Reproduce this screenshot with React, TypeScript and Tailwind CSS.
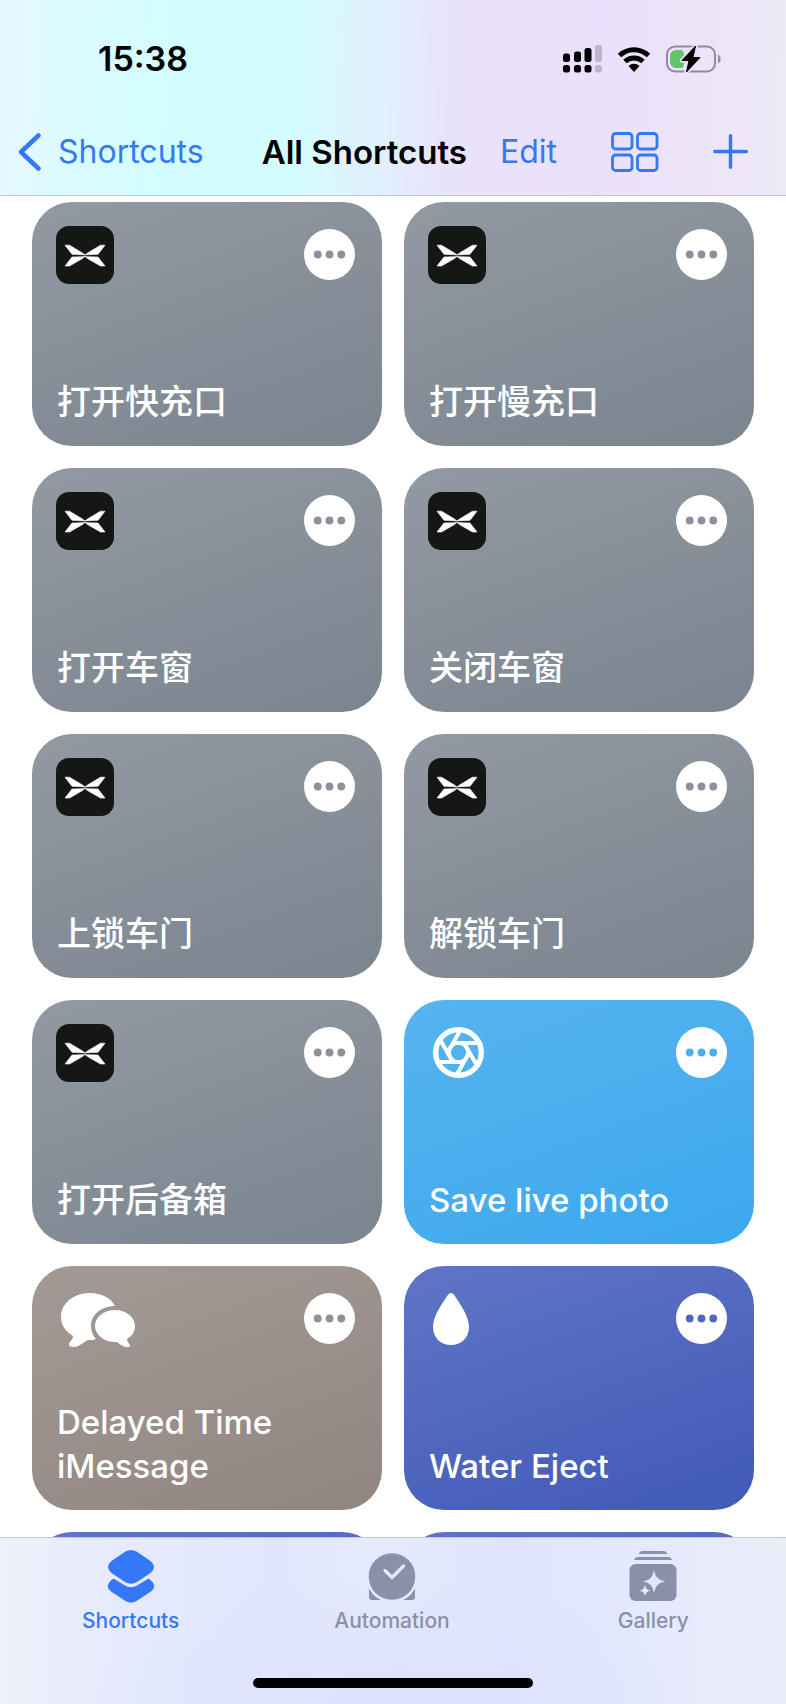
import React from 'react';

type Glyph = 'app' | 'aperture' | 'bubbles' | 'drop';
type Tone = 'gray' | 'sky' | 'taupe' | 'indigo';

interface Shortcut {
    title: string;
    glyph: Glyph;
    tone: Tone;
}

const shortcuts: Shortcut[] = [
    { title: '打开快充口', glyph: 'app', tone: 'gray' },
    { title: '打开慢充口', glyph: 'app', tone: 'gray' },
    { title: '打开车窗', glyph: 'app', tone: 'gray' },
    { title: '关闭车窗', glyph: 'app', tone: 'gray' },
    { title: '上锁车门', glyph: 'app', tone: 'gray' },
    { title: '解锁车门', glyph: 'app', tone: 'gray' },
    { title: '打开后备箱', glyph: 'app', tone: 'gray' },
    { title: 'Save live photo', glyph: 'aperture', tone: 'sky' },
    { title: 'Delayed Time iMessage', glyph: 'bubbles', tone: 'taupe' },
    { title: 'Water Eject', glyph: 'drop', tone: 'indigo' },
];

const toneStyles: Record<Tone, { card: string; dots: string }> = {
    gray: { card: 'from-[#9299a2] to-[#7b858f]', dots: 'text-[#8a919b]' },
    sky: { card: 'from-[#56b4ef] to-[#3ca8ee]', dots: 'text-[#4aafef]' },
    taupe: { card: 'from-[#a39a96] to-[#918581]', dots: 'text-[#9a8f8b]' },
    indigo: { card: 'from-[#6075c6] to-[#4159b8]', dots: 'text-[#5067c0]' },
};

const AppGlyph = () => (
    <svg viewBox="0 0 58 58" className="w-[58px] h-[58px]">
        <rect width="58" height="58" rx="13" fill="#141713" />
        <g fill="#fff" stroke="#fff" strokeWidth="0.6" strokeLinejoin="round">
            <path d="M9 19.200 H13.500 L26.500 27 L29 29 L26 28.700 L16 28.300 Z" />
            <path d="M9 40 H13.500 L26.500 32.600 L29 30.400 L26 30.700 L16 31 Z" />
            <path d="M49 19.200 H44.500 L31.500 27 L29 29 L32 28.700 L42 28.300 Z" />
            <path d="M49 40 H44.500 L31.500 32.600 L29 30.400 L32 30.700 L42 31 Z" />
        </g>
    </svg>
);

const ApertureGlyph = () => (
    <svg viewBox="0 0 51 51" className="w-[51px] h-[51px]" fill="none" stroke="#fff">
        <circle cx="25.500" cy="25.500" r="22.800" strokeWidth="5.400" />
        <circle cx="25.500" cy="25.500" r="9.500" strokeWidth="3.600" />
        {[0, 60, 120, 180, 240, 300].map((angle) => (
            <path key={angle} d="M19 16 H44" strokeWidth="4" transform={`rotate(${angle} 25.5 25.5)`} />
        ))}
    </svg>
);

const BubblesGlyph = () => (
    <svg viewBox="0 0 75 55" className="w-[75px] h-[55px]" fill="#fff">
        <path d="M54 13 C50 5 40 0 29 0 C13 0 0 10 0 24 C0 32 4 38 12 43 C12 47 8 49 8 51 C8 54 11 54 14 54 C19 53 23 49 27 47 C30 47 33 47 35 46 C32 43 30 38 30 33 C30 22 40 13 54 13 Z" />
        <path d="M54 17 C65 17 74 24 74 33 C74 39 71 43 66 46 C66 49 69 51 69 53 C68 55 64 54 62 53 C59 52 58 50 56 49 C44 50 34 42 34 33 C34 24 43 17 54 17 Z" />
    </svg>
);

const DropGlyph = () => (
    <svg viewBox="0 0 36 52" className="w-9 h-[52px]" fill="#fff">
        <path d="M18 0 C19.500 0 20.500 1 21.500 2.500 C27 11 36 23 36 34 C36 45 28 52 18 52 C8 52 0 45 0 34 C0 23 9 11 14.500 2.500 C15.500 1 16.500 0 18 0 Z" />
    </svg>
);

const glyphs: Record<Glyph, React.ReactNode> = {
    app: <AppGlyph />,
    aperture: <div className="pt-[3px] pl-[5px]"><ApertureGlyph /></div>,
    bubbles: <div className="pt-[3px] pl-[5px]"><BubblesGlyph /></div>,
    drop: <div className="pt-[3px] pl-[5px]"><DropGlyph /></div>,
};

const ShortcutCard: React.FC<Shortcut> = ({ title, glyph, tone }) => (
    <li className={`flex flex-col justify-between h-[244px] px-6 pt-6 pb-[22px] rounded-[40px] bg-linear-160 ${toneStyles[tone].card}`}>
        <div className="flex items-start justify-between">
            {glyphs[glyph]}
            <button type="button" aria-label={`Edit ${title}`} className={`mt-[3px] mr-[3px] ${toneStyles[tone].dots}`}>
                <svg viewBox="0 0 52 52" className="block w-[51px] h-[51px]">
                    <circle cx="26" cy="26" r="26" fill="#fff" />
                    <g fill="currentColor">
                        <circle cx="14" cy="26" r="4" />
                        <circle cx="26" cy="26" r="4" />
                        <circle cx="38" cy="26" r="4" />
                    </g>
                </svg>
            </button>
        </div>
        <h2 className={`pl-px leading-[44px] font-medium text-white ${glyph === 'app' ? 'text-[34px]' : 'text-[33px]'}`}>{title}</h2>
    </li>
);

const StatusBar = () => (
    <div className="flex items-center justify-between h-[118px] pl-[98px] pr-[65px]">
        <span className="text-[34px] leading-10 font-semibold text-black">15:38</span>
        <div className="flex items-center gap-[15px]">
            <svg viewBox="0 0 39 28" className="w-[39px] h-7">
                <rect x="0" y="8.500" width="7" height="8.500" rx="2.500" />
                <rect x="11" y="6.500" width="7" height="10.500" rx="2.500" />
                <rect x="21.500" y="3" width="7" height="14" rx="2.500" />
                <rect x="0" y="20" width="7" height="7.500" rx="2.500" />
                <rect x="11" y="20" width="7" height="7.500" rx="2.500" />
                <rect x="21.500" y="20" width="7" height="7.500" rx="2.500" />
                <g fill="#c0b4cd">
                    <rect x="32" y="0" width="7" height="17" rx="2.500" />
                    <rect x="32" y="20" width="7" height="7.500" rx="2.500" />
                </g>
            </svg>
            <svg viewBox="0 0 34 26" className="w-[34px] h-[26px]" fill="none" stroke="#000" strokeWidth="5">
                <path d="M2.500 9.500 A21 21 0 0 1 31.500 9.500" />
                <path d="M8 15.500 A13 13 0 0 1 26 15.500" />
                <path d="M17 26 L11.500 20 A8 8 0 0 1 22.500 20 Z" fill="#000" stroke="none" />
            </svg>
            <svg viewBox="0 0 55 28" className="w-[55px] h-7">
                <rect x="1" y="1.500" width="48" height="25" rx="8" fill="none" stroke="#93899c" strokeWidth="2" />
                <path d="M52 9.500 C55.500 11 55.500 17 52 18.500 Z" fill="#93899c" />
                <path d="M10 5 H16 Q18.500 6.500 18.500 14 Q18.500 21.500 16 23 H10 A6 6 0 0 1 4 17 V11 A6 6 0 0 1 10 5 Z" fill="#62c466" />
                <path d="M29.500 1 L16 15.500 H23 L20.500 27 L34 12.500 H27 Z" stroke="#ebe0fa" strokeWidth="4.500" strokeLinejoin="round" />
                <path d="M29.500 1 L16 15.500 H23 L20.500 27 L34 12.500 H27 Z" stroke="#000" strokeWidth="1" strokeLinejoin="round" />
            </svg>
        </div>
    </div>
);

const NavBar = () => (
    <nav className="flex items-center flex-1 pl-[18px] pr-[38px] pb-[10px] text-[32px] leading-10 text-[#3478f6]">
        <a href="#back" className="flex items-center gap-[17px]">
            <svg viewBox="0 0 23 38" className="w-[23px] h-[38px]" fill="none" stroke="currentColor" strokeWidth="4.500" strokeLinecap="round" strokeLinejoin="round">
                <path d="M20.500 2.500 L3 19 L20.500 35.500" />
            </svg>
            Shortcuts
        </a>
        <h1 className="ml-auto mr-[33px] text-[33px] font-semibold text-black">All Shortcuts</h1>
        <button type="button">Edit</button>
        <button type="button" aria-label="Grid view" className="ml-[54px]">
            <svg viewBox="0 0 48 40" className="block w-12 h-10" fill="none" stroke="currentColor" strokeWidth="2.800">
                <rect x="1.500" y="1.500" width="19.500" height="15.500" rx="3" />
                <rect x="26.500" y="1.500" width="19.500" height="15.500" rx="3" />
                <rect x="1.500" y="23" width="19.500" height="15.500" rx="3" />
                <rect x="26.500" y="23" width="19.500" height="15.500" rx="3" />
            </svg>
        </button>
        <button type="button" aria-label="Add shortcut" className="ml-[54px]">
            <svg viewBox="0 0 35 35" className="block w-[35px] h-[35px]" fill="none" stroke="currentColor" strokeWidth="3.400" strokeLinecap="round">
                <path d="M17.500 1.700 V33.300 M1.700 17.500 H33.300" />
            </svg>
        </button>
    </nav>
);

const ShortcutsTabIcon = () => (
    <svg viewBox="0 0 48 54" className="w-12 h-[54px]" fill="currentColor">
        <path d="M18.500 2.500 Q24 -0.500 29.500 2.500 L43.500 12 Q50.500 18 43.500 24 L30 33 Q24 36.500 18 33 L4.500 24 Q-2.500 18 4.500 12 Z" />
        <path d="M6.500 29.500 L18 36.500 Q24 40 30 36.500 L41.500 29.500 L44 31.500 Q50.500 37 44 42.500 L29.500 52 Q24 55 18.500 52 L4 42.500 Q-2.500 37 4 31.500 Z" />
    </svg>
);

const AutomationTabIcon = () => (
    <svg viewBox="0 0 48 54" className="w-12 h-[54px]" fill="currentColor">
        <path d="M1 36 H47 V48 Q47 51 44 51 H4 Q1 51 1 48 Z" />
        <circle cx="24" cy="27.500" r="26" fill="#e3e8fd" />
        <circle cx="24" cy="27.500" r="23.300" />
        <path d="M17 21.500 L24 28.500 L35.500 17" fill="none" stroke="#e5eafc" strokeWidth="3.200" strokeLinecap="round" strokeLinejoin="round" />
    </svg>
);

const GalleryTabIcon = () => (
    <svg viewBox="0 0 48 54" className="w-12 h-[54px]" fill="currentColor">
        <path d="M13 2 H35 Q37 2 38.500 5 H9.500 Q11 2 13 2 Z" />
        <path d="M9 8 H39 Q42 8 43 11 H5 Q6 8 9 8 Z" />
        <rect x="0.500" y="15" width="47" height="37" rx="6" />
        <g fill="#e3e7fc">
            <path d="M25 21 Q26.500 31.500 36.500 32.500 Q26.500 33.500 25 44 Q23.500 33.500 14 32.500 Q23.500 31.500 25 21 Z" />
            <path d="M16 36 Q17 41 21.500 41.500 Q17 42.500 16 47 Q15 42.500 10.500 41.500 Q15 41 16 36 Z" />
        </g>
    </svg>
);

const tabs = [
    { label: 'Shortcuts', icon: <ShortcutsTabIcon />, active: true },
    { label: 'Automation', icon: <AutomationTabIcon />, active: false },
    { label: 'Gallery', icon: <GalleryTabIcon />, active: false },
];

const TabBar = () => (
    <footer className="relative z-10 flex flex-col justify-between h-[167px] pt-[11px] pb-4 border-t border-[#c4c6d2] bg-[radial-gradient(ellipse_at_50%_100%,#dce1fe_0%,rgba(220,225,254,0)_55%),linear-gradient(90deg,#eef0fa_0%,#e7ebfc_12%,#e1e6fe_35%,#e5eafc_48%,#e0e4fe_65%,#e5e9fd_82%,#ebedf9_100%)]">
        <nav className="grid grid-cols-3 pr-[2px]">
            {tabs.map(({ label, icon, active }) => (
                <a
                    key={label}
                    href={`#${label.toLowerCase()}`}
                    className={`flex flex-col items-center gap-[2px] text-[21px] leading-8 font-medium ${active ? 'text-[#3478f6]' : 'text-[#8a90aa]'}`}
                >
                    {icon}
                    {label}
                </a>
            ))}
        </nav>
        <div className="self-center w-[280px] h-[10px] rounded-full bg-black" />
    </footer>
);

export default function App() {
    return (
        <div className="flex flex-col h-screen overflow-hidden bg-white font-['Inter','Noto_Sans_CJK_SC',sans-serif]">
            <header className="flex flex-col shrink-0 h-[196px] border-b border-[#bccad6] bg-[linear-gradient(92deg,#e6f8ff_0%,#dafbff_10%,#d2fdfe_22%,#d3fcfe_38%,#e1effe_49%,#e9e3fa_57%,#ebe0fb_76%,#ede9f6_100%)]">
                <StatusBar />
                <NavBar />
            </header>
            <main className="flex-1 min-h-0 overflow-hidden px-8 pt-[6px]">
                <ul className="grid grid-cols-2 gap-[22px]">
                    {shortcuts.map((shortcut) => (
                        <ShortcutCard key={shortcut.title} {...shortcut} />
                    ))}
                    {/* Next row, scrolled under the tab bar */}
                    <li className="h-[244px] rounded-[40px] bg-linear-160 from-[#6075c6] to-[#4159b8]" />
                    <li className="h-[244px] rounded-[40px] bg-linear-160 from-[#6075c6] to-[#4159b8]" />
                </ul>
            </main>
            <TabBar />
        </div>
    );
}
